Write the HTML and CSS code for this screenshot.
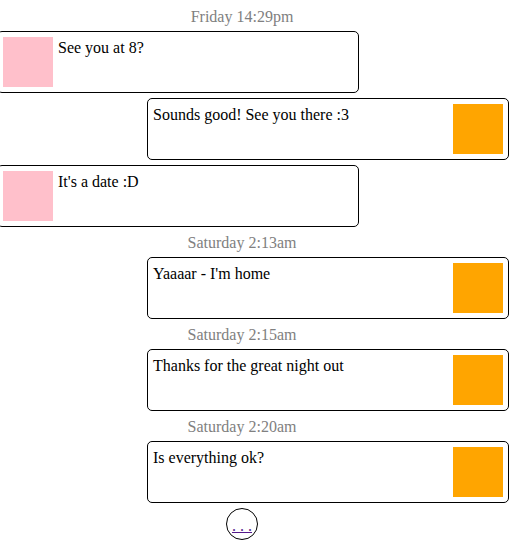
FILE: index.html
```html
<!DOCTYPE html>
<html lang="en">
<head>
    <meta charset="UTF-8">
    <meta name="viewport" content="width=device-width, initial-scale=1.0">
    <title>Chat</title>
    <link rel="stylesheet" href="styles.css">
</head>
<body>
    <div class="chat">
        <div class="stamp">Friday 14:29pm</div>

        <div class="message them">
            <div class="avatar"></div>
            <div class="text">See you at 8?</div>
        </div>

        <div class="message me">
            <div class="text">Sounds good! See you there :3</div>
            <div class="avatar"></div>
        </div>

        <div class="message them">
            <div class="avatar"></div>
            <div class="text">It's a date :D</div>
        </div>

        <div class="stamp">Saturday 2:13am</div>

        <div class="message me">
            <div class="text">Yaaaar - I'm home</div>
            <div class="avatar"></div>
        </div>

        <div class="stamp">Saturday 2:15am</div>

        <div class="message me">
            <div class="text">Thanks for the great night out</div>
            <div class="avatar"></div>
        </div>

        <div class="stamp">Saturday 2:20am</div>

        <div class="message me">
            <div class="text">Is everything ok?</div>
            <div class="avatar"></div>
        </div>

        <div class="typing">
            <a href="#">. . .</a>
        </div>
    </div>
</body>
</html>
```

FILE: styles.css
```css
body {
    font-family: 'Liberation Serif', 'Times New Roman', serif;
    font-size: 16px;
    margin: 0;
    padding: 0;
    color: #000;
    background-color: #fff;
}

.chat {
    display: flex;
    flex-direction: column;
    gap: 5px;
    padding-top: 6px;
}

.stamp {
    width: 484px;
    height: 20px;
    padding-top: 1px;
    box-sizing: border-box;
    line-height: 20px;
    text-align: center;
    color: gray;
}

.message {
    display: flex;
    width: 362px;
    box-sizing: border-box;
    padding: 5px;
    border: 1px solid #000;
    border-radius: 5px;
}

.message.them {
    margin-left: -3px;
}

.message.me {
    margin-left: 147px;
}

.text {
    padding-top: 2px;
}

.avatar {
    flex: none;
    width: 50px;
    height: 50px;
}

.them .avatar {
    background-color: pink;
    margin-right: 5px;
}

.me .avatar {
    background-color: orange;
    margin-left: auto;
}

.typing {
    width: 30px;
    height: 30px;
    margin-left: 226px;
    border: 1px solid #000;
    border-radius: 50%;
    line-height: 34px;
    text-align: center;
}

.typing a {
    color: #551a8b;
}
```
